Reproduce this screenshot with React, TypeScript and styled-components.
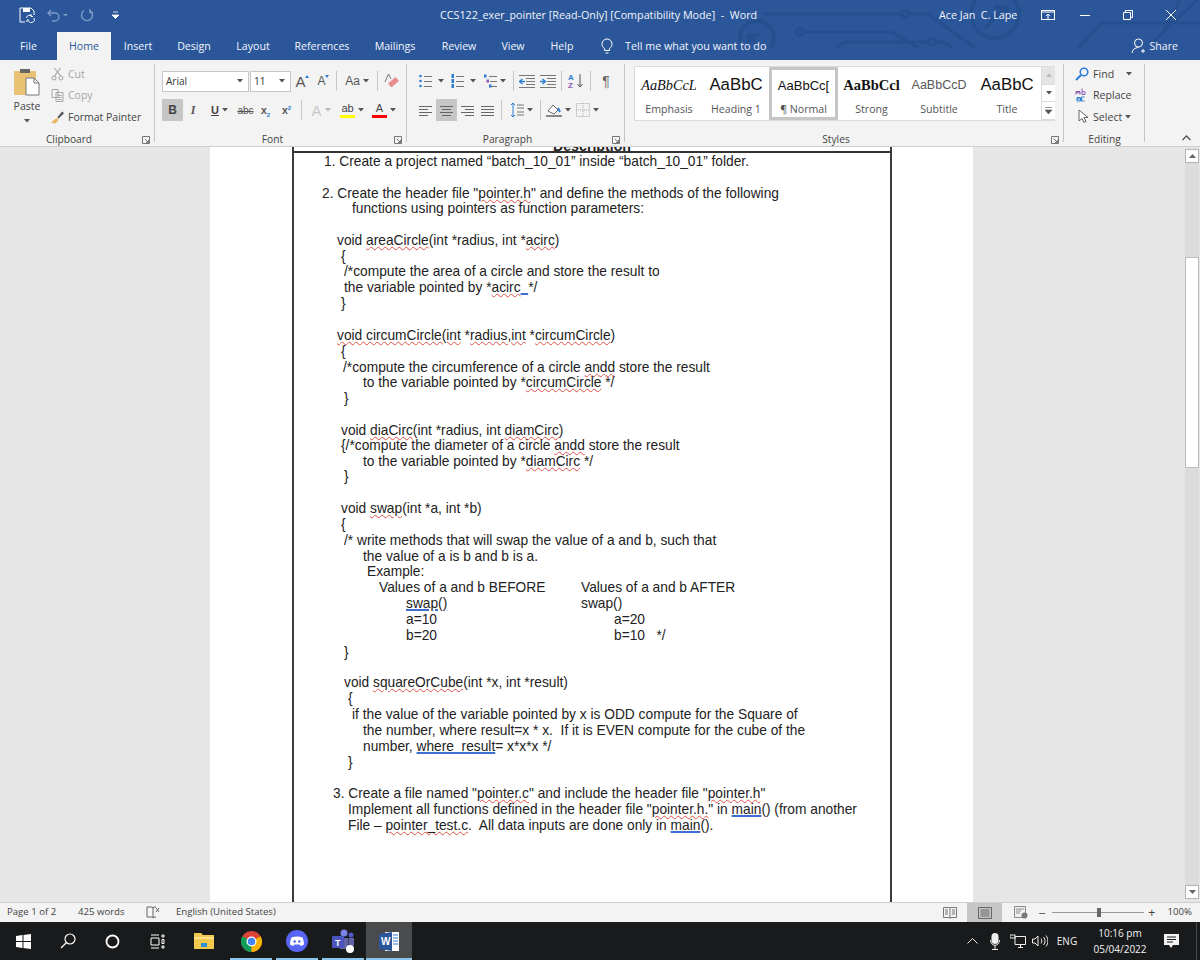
import React from "react";
import styled, { createGlobalStyle } from "styled-components";

const Global = createGlobalStyle`
  html, body { margin: 0; padding: 0; height: 100%; overflow: hidden; background: #e6e6e6; }
  #root { width: 1200px; height: 960px; }
  * { box-sizing: border-box; }
`;
const UI = `"Open Sans", "Noto Sans", sans-serif`;

const Shell = styled.div`
  width: 1200px; height: 960px; display: flex; flex-direction: column;
  font-family: ${UI}; font-size: 10.5px; color: #444; overflow: hidden;
`;
const Header = styled.header`
  position: relative; height: 60px; flex: none; background: #2b579a; color: #f2f5fa; overflow: hidden;
`;
const Circuit = styled.svg`
  position: absolute; left: 0; top: 0; width: 1200px; height: 48px; pointer-events: none;
`;
const TitleRow = styled.div`
  position: relative; height: 30px; display: flex; align-items: center; padding-left: 19px;
`;
const Qat = styled.div`
  width: 421px; display: flex; align-items: center; flex: none; gap: 9px;
`;
const QatIcon = styled.svg<{ $ml: number }>`
  margin-left: ${p => p.$ml}px; flex: none;
`;
const Title = styled.div`
  width: 499px; flex: none; font-size: 10.75px; white-space: pre;
`;
const User = styled.div`
  width: 94px; flex: none; font-size: 10.75px; white-space: pre;
`;
const WinBtn = styled.div<{ $w: number }>`
  width: ${p => p.$w}px; flex: none; display: flex; justify-content: center; align-items: center;
`;
const TabRow = styled.nav`
  position: relative; height: 30px; display: flex; align-items: flex-end;
`;
const Tab = styled.div<{ $w: number; $on?: boolean }>`
  width: ${p => p.$w}px; height: 28px; flex: none; display: flex; align-items: center; justify-content: center;
  font-size: 10.6px; padding-bottom: 1px;
  ${p => p.$on ? "background:#f3f3f3;color:#2b579a;" : ""}
`;
const TellMe = styled.div`
  display: flex; align-items: center; gap: 12px; margin-left: 14px; height: 28px; font-size: 10.75px;
`;
const ShareBox = styled.div`
  margin-left: auto; margin-right: 22px; height: 28px; display: flex; align-items: center; gap: 3px; font-size: 10.6px;
`;

const Ribbon = styled.section`
  height: 87px; flex: none; background: #f3f3f3; border-bottom: 1px solid #cfcfcf; display: flex;
`;
const Group = styled.div<{ $w: number; $pl?: number }>`
  position: relative; width: ${p => p.$w}px; flex: none; height: 86px; display: flex; flex-direction: column;
  padding-left: ${p => p.$pl ?? 0}px;
  &::after { content: ""; position: absolute; right: 0; top: 4px; bottom: 4px; width: 1px; background: #c6c6c6; }
`;
const GroupBody = styled.div`
  height: 71px; flex: none;
`;
const GroupLabel = styled.div<{ $shift?: boolean }>`
  position: absolute; left: 0; right: ${p => p.$shift ? 17 : 0}px; bottom: 0; text-align: center; font-size: 10.2px; color: #444; line-height: 14px;
`;
const Launcher = styled.svg`
  position: absolute; right: 5px; bottom: 2px; width: 8px; height: 8px;
`;
const ClipWrap = styled.div`
  display: flex; height: 71px;
`;
const PasteCol = styled.div`
  width: 51px; flex: none; display: flex; flex-direction: column; align-items: center; padding: 8px 0 0 3px; font-size: 10.5px;
`;
const PasteText = styled.span`
  margin-top: 3px; line-height: 15px;
`;
const PasteArrow = styled.span`
  margin-top: 5px; line-height: 0;
`;
const ClipList = styled.div`
  display: flex; flex-direction: column; padding-top: 3px;
`;
const ClipRow = styled.div<{ $off?: boolean }>`
  height: 21.5px; display: flex; align-items: center; gap: 4px; font-size: 10.5px; color: ${p => p.$off ? "#a6a6a6" : "#444"}; white-space: pre;
`;
const ToolRow = styled.div<{ $top: number }>`
  display: flex; align-items: center; height: 22px; margin-top: ${p => p.$top}px;
`;
const FontBox = styled.div<{ $w: number }>`
  width: ${p => p.$w}px; height: 21px; flex: none; background: #fff; border: 1px solid #c6c6c6; margin-right: 1px;
  display: flex; align-items: center; justify-content: space-between; padding: 0 5px 0 3px; font-size: 10px; color: #333;
`;
const Btn = styled.div<{ $w: number; $on?: boolean; $gap?: number }>`
  width: ${p => p.$w}px; height: 22px; flex: none; display: flex; align-items: center; justify-content: center; gap: ${p => p.$gap ?? 3}px;
  color: #444; font-size: 12px; background: ${p => p.$on ? "#c6c6c6" : "transparent"};
`;
const Sep = styled.div<{ $mx: number }>`
  width: 1px; height: 20px; flex: none; background: #c6c6c6; margin: 0 ${p => p.$mx}px;
`;
const Bold = styled.span`
  font: bold 12px "Liberation Sans", sans-serif; color: #444;
`;
const Italic = styled.span`
  font: italic bold 12px "Liberation Serif", serif; color: #555;
`;
const Under = styled.span`
  font: bold 11px "Liberation Sans", sans-serif; color: #444; text-decoration: underline;
`;
const Strike = styled.span`
  font: 10px "Liberation Sans", sans-serif; color: #555; text-decoration: line-through;
`;
const Script = styled.span`
  font: bold 10.5px "Liberation Sans", sans-serif; color: #555;
  sub, sup { font-size: 6px; color: #2b7cd3; line-height: 0; }
`;
const BigA = styled.span<{ $size: number; $c?: string }>`
  font: ${p => p.$size}px "Liberation Sans", sans-serif; color: ${p => p.$c ?? "#555"}; line-height: 1;
`;
const Caret = styled.svg`
  margin: -9px 0 0 -4px; flex: none;
`;
const ColorA = styled.span<{ $bar: string }>`
  display: inline-flex; flex-direction: column; align-items: center; font: 11px/11px "Liberation Sans", sans-serif; color: #444; width: 15px;
  &::after { content: ""; width: 15px; height: 3px; margin-top: 1px; background: ${p => p.$bar}; }
`;
const Gallery = styled.div`
  margin: 6px 0 0 9px; width: 421px; height: 55px; display: flex; background: #fff; border: 1px solid #dcdcdc;
`;
const StyleItem = styled.div<{ $w: number; $on?: boolean }>`
  width: ${p => p.$w}px; flex: none; height: 53px; display: flex; flex-direction: column; align-items: center;
  border: 3px solid ${p => p.$on ? "#c6c6c6" : "transparent"}; overflow: hidden;
`;
const Sample = styled.div<{ $font: string }>`
  height: 30px; display: flex; align-items: center; white-space: pre; color: #111; ${p => p.$font}
`;
const SampleName = styled.div`
  font-size: 10.6px; color: #555; margin-top: 2px; white-space: pre; line-height: 14px;
`;
const GalleryScroll = styled.div`
  width: 14px; margin-left: auto; flex: none; display: flex; flex-direction: column; border-left: 1px solid #dcdcdc;
`;
const ScrollCell = styled.div<{ $off?: boolean }>`
  flex: 1; display: flex; align-items: center; justify-content: center; background: ${p => p.$off ? "#e4e4e4" : "#fff"};
  border-bottom: 1px solid #dcdcdc; color: #555;
`;
const EditList = styled.div`
  display: flex; flex-direction: column; padding: 3px 0 0 11px;
`;
const EditRow = styled.div<{ $gap: number }>`
  height: 21.5px; display: flex; align-items: center; gap: ${p => p.$gap}px; font-size: 10.6px; color: #444; white-space: pre;
`;
const Collapse = styled.div`
  flex: 1; display: flex; align-items: flex-end; justify-content: flex-end; padding: 0 9px 5px 0;
`;

const DocArea = styled.main`
  flex: 1; display: flex; min-height: 0; background: #e6e6e6;
`;
const Canvas = styled.div`
  flex: 1; overflow: hidden; padding-left: 210px;
`;
const Page = styled.div`
  width: 763px; height: 800px; background: #fff; padding-left: 82px;
`;
const Table = styled.div`
  width: 600px; height: 800px; border-left: 2px solid #3c3c3c; border-right: 2px solid #3c3c3c;
  font-family: "Liberation Sans", Arial, sans-serif; font-size: 13.75px; color: #222;
`;
const Head = styled.div`
  height: 6px; overflow: hidden; display: flex; justify-content: center; align-items: flex-end; margin-bottom: 1px;
  border-bottom: 2px solid #333; font-weight: bold; line-height: 16px; font-size: 14.2px; flex: none;
`;
const HeadText = styled.span`
  margin-bottom: -3px;
`;
const Line = styled.div<{ $x: number; $h: number }>`
  padding-left: ${p => p.$x}px; height: ${p => p.$h}px; line-height: 16px; white-space: pre; display: flex;
`;
const Col = styled.span<{ $w: number }>`
  display: inline-block; width: ${p => p.$w}px; flex: none;
`;
const Sp = styled.span`
  text-decoration: underline wavy #e0504a 1px; text-underline-offset: 1px;
`;
const Gr = styled.span`
  text-decoration: underline solid #3c6fd0 2px; text-underline-offset: 1px;
`;
const VBar = styled.aside`
  width: 16px; flex: none; display: flex; flex-direction: column; padding: 2px 1px 3px 1px;
`;
const VBtn = styled.div`
  width: 14px; height: 14px; background: #fff; border: 1px solid #b4b4b4; display: flex; align-items: center; justify-content: center; flex: none;
`;
const VTrack = styled.div`
  flex: 1; padding-top: 94px; background: #dcdcdc;
`;
const VThumb = styled.div`
  width: 14px; height: 211px; background: #fff; border: 1px solid #bcbcbc;
`;

const Status = styled.footer`
  height: 20px; flex: none; background: #f3f3f3; border-top: 1px solid #cfcfcf; display: flex; align-items: center;
  font-size: 9.6px; color: #444;
`;
const StatusItem = styled.div<{ $w: number; $pl?: number }>`
  width: ${p => p.$w}px; flex: none; white-space: pre; display: flex; align-items: center; height: 19px;
  padding: 0 0 2px ${p => p.$pl ?? 0}px;
`;
const ZoomPct = styled.div`
  flex: 1; text-align: right; padding: 0 8px 2px 0; white-space: pre;
`;
const ViewBtn = styled.div<{ $on?: boolean; $w: number }>`
  width: ${p => p.$w}px; height: 19px; flex: none; display: flex; align-items: center; justify-content: center;
  background: ${p => p.$on ? "#c6c6c6" : "transparent"};
`;
const Zoomer = styled.div`
  width: 92px; height: 1px; background: #9a9a9a; flex: none; margin: 0 4px 0 7px; position: relative;
`;
const ZoomThumb = styled.div`
  position: absolute; left: 45px; top: -4px; width: 4px; height: 9px; background: #666;
`;

const Taskbar = styled.footer`
  height: 38px; flex: none; background: #191a1b; display: flex; color: #f2f2f2;
`;
const Slot = styled.div<{ $w: number; $run?: boolean; $act?: boolean }>`
  position: relative; width: ${p => p.$w}px; flex: none; display: flex; align-items: center; justify-content: center;
  background: ${p => p.$act ? "#4a4b4c" : "transparent"};
  ${p => p.$run ? `&::after{content:"";position:absolute;left:${p.$act ? 0 : 2}px;right:${p.$act ? 0 : 2}px;bottom:0;height:2px;background:#8cc4ee;}` : ""}
`;
const Tray = styled.div`
  margin-left: auto; display: flex; width: 240px; height: 38px;
`;
const Clock = styled.div`
  width: 72px; flex: none; display: flex; flex-direction: column; align-items: center; justify-content: center;
  font-size: 10px; line-height: 16px; white-space: pre;
`;
const Eng = styled.div`
  width: 34px; flex: none; display: flex; align-items: center; justify-content: center; font-size: 10px;
`;
const DeskEdge = styled.div`
  width: 11px; flex: none; border-right: 1px solid #4a4b4c;
`;

const Arrow = ({ c = "#555" }: { c?: string }) => (
  <svg width="6" height="4" viewBox="0 0 6 4"><path d="M0 0h6L3 3.500z" fill={c} /></svg>
);
const Lines = ({ kind = "l" }: { kind?: string }) => {
  const ys = [3, 6, 9, 12];
  const xs: Record<string, [number, number][]> = {
    l: [[0, 13], [0, 9], [0, 13], [0, 9]],
    c: [[0, 13], [2, 11], [0, 13], [2, 11]],
    r: [[0, 13], [4, 13], [0, 13], [4, 13]],
    j: [[0, 13], [0, 13], [0, 13], [0, 13]],
  };
  return (
    <svg width="13" height="15" viewBox="0 0 13 15">
      {ys.map((y, i) => <path key={y} d={`M${xs[kind][i][0]} ${y}.5H${xs[kind][i][1]}`} stroke="#666" />)}
    </svg>
  );
};
const ListIcon = ({ kind }: { kind: "b" | "n" | "m" }) => (
  <svg width="13" height="14" viewBox="0 0 13 14">
    {[2, 7, 12].map((y, i) => (
      <g key={y}>
        {kind === "b" && <circle cx="1.500" cy={y} r="1.300" fill="#2b7cd3" />}
        {kind === "n" && <rect x=".5" y={y - 2} width="2.500" height="4" fill="#2b7cd3" />}
        {kind === "m" && <rect x={i * 2.5} y={y - 1.500} width="2.500" height="3" fill={i === 1 ? "#8a5ab5" : "#2b7cd3"} />}
        <path d={`M${kind === "m" ? 5 + i : 5} ${y}.5H13`} stroke="#777" />
      </g>
    ))}
  </svg>
);
const IndentIcon = ({ flip }: { flip?: boolean }) => (
  <svg width="16" height="13" viewBox="0 0 16 13">
    {[0, 3, 6, 9, 12].map(y => <path key={y} d={`M${y === 0 || y === 12 ? 0 : 7} ${y}.5H16`} stroke="#777" />)}
    <path d={flip ? "M0 6.500h5M2.500 4l3 2.500-3 2.500" : "M6 6.500H1M3.500 4L.5 6.500l3 2.500"} stroke="#2b7cd3" strokeWidth="1.400" fill="none" />
  </svg>
);

const raw: [number, number, React.ReactNode][] = [
  [324, 161, <>1. Create a project named “batch_10_01” inside “batch_10_01” folder.</>],
  [322, 193, <>2. Create the header file "<Sp>pointer.h</Sp>" and define the methods of the following</>],
  [352, 208, <>functions using pointers as function parameters:</>],
  [337, 240, <>void <Sp>areaCircle</Sp>(int *radius, int *<Sp>acirc</Sp>)</>],
  [341, 256, <>{"{"}</>],
  [344, 271, <>/*compute the area of a circle and store the result to</>],
  [344, 287, <>the variable pointed by *<Sp>acirc</Sp> <Gr>  </Gr>*/</>],
  [341, 303, <>{"}"}</>],
  [337, 335, <><Sp>void circumCircle(int</Sp> *<Sp>radius,int</Sp> *<Sp>circumCircle</Sp>)</>],
  [341, 351, <>{"{"}</>],
  [343, 367, <>/*compute the circumference of a circle <Sp>andd</Sp> store the result</>],
  [363, 382, <>to the variable pointed by *<Sp>circumCircle</Sp> */</>],
  [344, 398, <>{"}"}</>],
  [341, 430, <>void <Sp>diaCirc</Sp>(int *radius, int <Sp>diamCirc</Sp>)</>],
  [341, 445, <>{"{"}/*compute the diameter of a circle <Sp>andd</Sp> store the result</>],
  [363, 461, <>to the variable pointed by *<Sp>diamCirc</Sp> */</>],
  [344, 476, <>{"}"}</>],
  [341, 508, <>void <Sp>swap</Sp>(int *a, int *b)</>],
  [341, 524, <>{"{"}</>],
  [344, 540, <>/* write methods that will swap the value of a and b, such that</>],
  [363, 556, <>the value of a is b and b is a.</>],
  [367, 571, <>Example:</>],
  [379, 587, <><Col $w={202}>Values of a and b BEFORE</Col>Values of a and b AFTER</>],
  [406, 603, <><Col $w={175}><Gr>swap()</Gr></Col>swap()</>],
  [406, 619, <><Col $w={208}>a=10</Col>a=20</>],
  [406, 635, <><Col $w={208}>b=20</Col>b=10   */</>],
  [344, 652, <>{"}"}</>],
  [344, 682, <>void <Sp>squareOrCube</Sp>(int *x, int *result)</>],
  [348, 698, <>{"{"}</>],
  [352, 714, <>if the value of the variable pointed by x is ODD compute for the Square of</>],
  [363, 730, <>the number, where result=x * x.  If it is EVEN compute for the cube of the</>],
  [363, 746, <>number, <Gr>where  result</Gr>= x*x*x */</>],
  [348, 762, <>{"}"}</>],
  [333, 793, <>3. Create a file named "<Sp>pointer.c</Sp>" and include the header file "<Sp>pointer.h</Sp>"</>],
  [348, 809, <>Implement all functions defined in the header file "<Sp>pointer.h.</Sp>" in <Gr>main</Gr>() (from another</>],
  [348, 825, <>File – <Sp>pointer_test.c</Sp>.  All data inputs are done only in <Gr>main</Gr>().</>],
];
const tabs: [string, number][] = [["Insert", 54], ["Design", 58], ["Layout", 60], ["References", 78], ["Mailings", 68], ["Review", 60], ["View", 48], ["Help", 50]];
const styleItems: [string, number, string, string][] = [
  ["AaBbCcL", 68, "Emphasis", `font: italic 14.3px "Liberation Serif", serif;`],
  ["AaBbC", 66, "Heading 1", `font: 16.8px "Liberation Sans", sans-serif;`],
  ["AaBbCc[", 69, "¶ Normal", `font: 13px "Liberation Sans", sans-serif;`],
  ["AaBbCcl", 67, "Strong", `font: bold 14.5px "Liberation Serif", serif;`],
  ["AaBbCcD", 68, "Subtitle", `font: 12.5px "Liberation Sans", sans-serif; color:#555;`],
  ["AaBbC", 68, "Title", `font: 16.8px "Liberation Sans", sans-serif;`],
];
const LaunchIcon = () => (
  <Launcher viewBox="0 0 8 8"><path d="M.5 7.500v-7h7v7zM3 3l3.500 3.500M6.500 4v2.500H4" stroke="#777" fill="none" /></Launcher>
);

export default function App() {
  return (
    <Shell>
      <Global />
      <Header>
        <Circuit viewBox="0 0 1200 48">
          <g stroke="#24508f" strokeWidth="3" fill="none">
            <circle cx="757" cy="38" r="17" strokeWidth="4" />
            <path d="M760 47L749 35M749 44v-9h10" strokeWidth="3.500" />
            <circle cx="995" cy="14" r="24" strokeWidth="4" />
            <path d="M985 28l20-20M994 7h13v13" strokeWidth="4" />
            <path d="M763 14H901M909 14h19l47 34" />
            <circle cx="905" cy="14" r="3.500" />
            <circle cx="800" cy="32" r="3.500" />
            <path d="M804 32H892l26 16" />
            <path d="M835 48l10-6H928M936 42h8l8 6" />
            <circle cx="932" cy="42" r="3.500" />
            <path d="M1078 48l24-25H1200M1153 42L1197 0M1163 33L1180 0" />
          </g>
        </Circuit>
        <TitleRow>
          <Qat>
            <svg width="16" height="16" viewBox="0 0 16 16"><path d="M1 1h11l3 3v4M1 1v14h5" fill="none" stroke="#fff" /><path d="M4 1h7v4H4z" fill="#fff" /><path d="M7.500 11a3 3 0 0 1 5-2M15 11a3 3 0 0 1-5.500 3M12 7v2.500h2M8 15v-2h2" stroke="#fff" fill="none" /></svg>
            <QatIcon $ml={3} width="22" height="14" viewBox="0 0 22 14"><path d="M4 2L1 5l3 3M1 5h7a4 4 0 0 1 0 8H5" stroke="#7d9ac6" strokeWidth="1.400" fill="none" /><path d="M16 6h5l-2.500 2.500z" fill="#7d9ac6" /></QatIcon>
            <QatIcon $ml={2} width="14" height="14" viewBox="0 0 14 14"><path d="M10 2.500a5.500 5.500 0 1 1-6 0M10 1v3.500h3" stroke="#7d9ac6" strokeWidth="1.400" fill="none" /></QatIcon>
            <QatIcon $ml={9} width="7" height="8" viewBox="0 0 7 8"><path d="M1 1h5M0 4h7L3.500 7.500z" stroke="#fff" fill="#fff" strokeWidth=".8" /></QatIcon>
          </Qat>
          <Title>CCS122_exer_pointer [Read-Only] [Compatibility Mode]  -  Word</Title>
          <User>Ace Jan  C. Lape</User>
          <WinBtn $w={30}><svg width="14" height="10" viewBox="0 0 14 10"><rect x=".5" y=".5" width="13" height="9" fill="none" stroke="#fff" /><path d="M1 2h12" stroke="#fff" /><path d="M7 9V4M5 6l2-2 2 2" stroke="#fff" fill="none" /></svg></WinBtn>
          <WinBtn $w={43}><svg width="10" height="1"><rect width="10" height="1" fill="#fff" /></svg></WinBtn>
          <WinBtn $w={43}><svg width="10" height="10" viewBox="0 0 10 10"><path d="M.5 2.500h7v7h-7zM2.500 2.500v-2h7v7h-2" fill="none" stroke="#fff" /></svg></WinBtn>
          <WinBtn $w={43}><svg width="10" height="10" viewBox="0 0 10 10"><path d="M0 0l10 10M10 0L0 10" stroke="#fff" /></svg></WinBtn>
        </TitleRow>
        <TabRow>
          <Tab $w={57}>File</Tab>
          <Tab $w={54} $on>Home</Tab>
          {tabs.map(([t, w]) => <Tab key={t} $w={w}>{t}</Tab>)}
          <TellMe>
            <svg width="12" height="16" viewBox="0 0 12 16"><path d="M3.500 10.500C2 9.500 1 8 1 6a5 5 0 0 1 10 0c0 2-1 3.500-2.500 4.500v2h-5zM4.500 15h3" stroke="#fff" fill="none" /></svg>
            Tell me what you want to do
          </TellMe>
          <ShareBox>
            <svg width="16" height="16" viewBox="0 0 16 16"><circle cx="7.500" cy="5" r="4" stroke="#fff" fill="none" /><path d="M1 15c.5-3.500 3-5.500 6.500-5.500M12 11v4M10 13h4" stroke="#fff" fill="none" /></svg>
            Share
          </ShareBox>
        </TabRow>
      </Header>

      <Ribbon>
        <Group $w={155}>
          <GroupBody>
            <ClipWrap>
              <PasteCol>
                <svg width="28" height="28" viewBox="0 0 28 28"><rect x="1" y="3" width="22" height="24" rx="1" fill="#eac274" /><rect x="7" y="1" width="10" height="4" fill="#666" /><path d="M13 10h8l5 5v12H13z" fill="#fff" stroke="#777" /><path d="M21 10v5h5" fill="none" stroke="#777" /></svg>
                <PasteText>Paste</PasteText>
                <PasteArrow><Arrow /></PasteArrow>
              </PasteCol>
              <ClipList>
                <ClipRow $off><svg width="13" height="14" viewBox="0 0 12 14"><path d="M3 1l6 8M9 1L3 9" stroke="#a6a6a6" strokeWidth="1.200" /><circle cx="2.500" cy="11" r="2" fill="none" stroke="#a6a6a6" /><circle cx="9.500" cy="11" r="2" fill="none" stroke="#a6a6a6" /></svg>Cut</ClipRow>
                <ClipRow $off><svg width="13" height="14" viewBox="0 0 12 14"><path d="M.5 1.500h6v8h-6zM4.500 4.500h7v9h-7z" fill="#f3f3f3" stroke="#a6a6a6" /><path d="M6 7.500h4M6 9.500h4M6 11.500h4" stroke="#a6a6a6" /></svg>Copy</ClipRow>
                <ClipRow><svg width="13" height="14" viewBox="0 0 14 14"><path d="M0 13l6-5 2 2-3 4z" fill="#e8b45e" /><path d="M7 7l5-6 2 2-6 6z" fill="#555" /></svg>Format Painter</ClipRow>
              </ClipList>
            </ClipWrap>
          </GroupBody>
          <GroupLabel $shift>Clipboard</GroupLabel>
          <LaunchIcon />
        </Group>

        <Group $w={252} $pl={7}>
          <GroupBody>
            <ToolRow $top={10}>
              <FontBox $w={87}>Arial<Arrow /></FontBox>
              <FontBox $w={41}>11<Arrow /></FontBox>
              <Btn $w={20}><BigA $size={15}>A</BigA><Caret width="4" height="3"><path d="M0 3L2 0l2 3z" fill="#2b7cd3" /></Caret></Btn>
              <Btn $w={22}><BigA $size={12}>A</BigA><Caret width="4" height="3"><path d="M0 0l2 3 2-3z" fill="#2b7cd3" /></Caret></Btn>
              <Sep $mx={2} />
              <Btn $w={36}><BigA $size={12}>Aa</BigA><Arrow /></Btn>
              <Sep $mx={2} />
              <Btn $w={24}><svg width="17" height="16" viewBox="0 0 17 16"><path d="M8 14l7-6-3.500-4-7.500 6.500 3 3.500z" fill="#e78f8f" /><path d="M1 9l3.500-8L7 6" stroke="#777" fill="none" /></svg></Btn>
            </ToolRow>
            <ToolRow $top={7}>
              <Btn $w={21} $on><Bold>B</Bold></Btn>
              <Btn $w={20}><Italic>I</Italic></Btn>
              <Btn $w={33}><Under>U</Under><Arrow /></Btn>
              <Btn $w={19}><Strike>abc</Strike></Btn>
              <Btn $w={21}><Script>x<sub>2</sub></Script></Btn>
              <Btn $w={21}><Script>x<sup>2</sup></Script></Btn>
              <Sep $mx={4} />
              <Btn $w={30}><BigA $size={15} $c="#c8c8c8">A</BigA><Arrow c="#bbb" /></Btn>
              <Btn $w={32}><ColorA $bar="#ffff00">ab</ColorA><Arrow /></Btn>
              <Btn $w={32}><ColorA $bar="#ff0000">A</ColorA><Arrow /></Btn>
            </ToolRow>
          </GroupBody>
          <GroupLabel $shift>Font</GroupLabel>
          <LaunchIcon />
        </Group>

        <Group $w={218} $pl={8}>
          <GroupBody>
            <ToolRow $top={10}>
              <Btn $w={32} $gap={6}><ListIcon kind="b" /><Arrow /></Btn>
              <Btn $w={32} $gap={6}><ListIcon kind="n" /><Arrow /></Btn>
              <Btn $w={32}><ListIcon kind="m" /><Arrow /></Btn>
              <Sep $mx={2} />
              <Btn $w={22}><IndentIcon /></Btn>
              <Btn $w={20}><IndentIcon flip /></Btn>
              <Sep $mx={3} />
              <Btn $w={22}><svg width="16" height="16" viewBox="0 0 16 16"><text x="0" y="7" fontSize="8" fontWeight="bold" fill="#2b7cd3" fontFamily="Liberation Sans">A</text><text x="0" y="15" fontSize="8" fontWeight="bold" fill="#8a5ab5" fontFamily="Liberation Sans">Z</text><path d="M12 1v13M9.500 11l2.500 3 2.500-3" stroke="#555" fill="none" /></svg></Btn>
              <Sep $mx={3} />
              <Btn $w={24}><BigA $size={14} $c="#666">¶</BigA></Btn>
            </ToolRow>
            <ToolRow $top={7}>
              <Btn $w={21}><Lines kind="l" /></Btn>
              <Btn $w={21} $on><Lines kind="c" /></Btn>
              <Btn $w={20}><Lines kind="r" /></Btn>
              <Btn $w={21}><Lines kind="j" /></Btn>
              <Sep $mx={3} />
              <Btn $w={32}><svg width="14" height="16" viewBox="0 0 14 16"><path d="M3 1v14M1 3l2-2 2 2M1 13l2 2 2-2" stroke="#2b7cd3" fill="none" /><path d="M7 3h7M7 6h7M7 10h7M7 13h7" stroke="#777" /></svg><Arrow /></Btn>
              <Sep $mx={3} />
              <Btn $w={28}><svg width="16" height="16" viewBox="0 0 16 16"><path d="M2 9l5-6 5 5-4 4z" fill="#fff" stroke="#666" /><path d="M12 6l2 4" stroke="#2b7cd3" strokeWidth="2" /><rect x="0" y="13" width="16" height="2" fill="#888" /></svg><Arrow /></Btn>
              <Btn $w={31}><svg width="14" height="14" viewBox="0 0 14 14"><rect x=".5" y=".5" width="13" height="13" fill="none" stroke="#aaa" strokeDasharray="1 1" /><path d="M7 0v14M0 7h14" stroke="#aaa" strokeDasharray="1 1" /></svg><Arrow /></Btn>
            </ToolRow>
          </GroupBody>
          <GroupLabel $shift>Paragraph</GroupLabel>
          <LaunchIcon />
        </Group>

        <Group $w={439}>
          <GroupBody>
            <Gallery>
              {styleItems.map(([s, w, n, f], i) => (
                <StyleItem key={n} $w={w} $on={i === 2}>
                  <Sample $font={f}>{s}</Sample>
                  <SampleName>{n}</SampleName>
                </StyleItem>
              ))}
              <GalleryScroll>
                <ScrollCell $off><svg width="6" height="4"><path d="M3 0l3 4H0z" fill="#bbb" /></svg></ScrollCell>
                <ScrollCell><Arrow /></ScrollCell>
                <ScrollCell><svg width="7" height="7"><path d="M0 .5h7M0 3h7L3.500 7z" stroke="#555" strokeWidth=".6" fill="#555" /></svg></ScrollCell>
              </GalleryScroll>
            </Gallery>
          </GroupBody>
          <GroupLabel $shift>Styles</GroupLabel>
          <LaunchIcon />
        </Group>

        <Group $w={81}>
          <GroupBody>
            <EditList>
              <EditRow $gap={4}><svg width="14" height="14" viewBox="0 0 14 14"><circle cx="9" cy="5" r="3.800" fill="none" stroke="#2b7cd3" strokeWidth="1.500" /><path d="M6 8l-5 5" stroke="#2b7cd3" strokeWidth="2" /></svg>Find   <Arrow /></EditRow>
              <EditRow $gap={3}><svg width="15" height="15" viewBox="0 0 15 15"><circle cx="3" cy="2.500" r="0" /><path d="M1 6.500V3.500h4v3M1 4.800h4M7 .5v6M7 3.800h3V6.500H7" stroke="#8a5ab5" fill="none" /><path d="M9.500 9h-3v4h3M5 9.500H2v3.500h3.500V9.500M2 11h3" stroke="#2b7cd3" fill="none" /></svg>Replace</EditRow>
              <EditRow $gap={3}><svg width="15" height="15" viewBox="0 0 15 15"><path d="M4 1v11l3-2.500 2 4 2-1-2-4h4z" fill="#fff" stroke="#666" /></svg>Select<Arrow /></EditRow>
            </EditList>
          </GroupBody>
          <GroupLabel>Editing</GroupLabel>
        </Group>
        <Collapse><svg width="9" height="6" viewBox="0 0 9 6"><path d="M.5 5L4.500 1l4 4" stroke="#555" strokeWidth="1.300" fill="none" /></svg></Collapse>
      </Ribbon>

      <DocArea>
        <Canvas>
          <Page>
            <Table>
              <Head><HeadText>Description</HeadText></Head>
              {raw.map(([x, y, c], i) => (
                <Line key={i} $x={x - 294} $h={(raw[i + 1]?.[1] ?? y + 16) - y}>{c}</Line>
              ))}
            </Table>
          </Page>
        </Canvas>
        <VBar>
          <VBtn><svg width="7" height="4"><path d="M3.500 0L7 4H0z" fill="#666" /></svg></VBtn>
          <VTrack><VThumb /></VTrack>
          <VBtn><svg width="7" height="4"><path d="M0 0h7L3.500 4z" fill="#666" /></svg></VBtn>
        </VBar>
      </DocArea>

      <Status>
        <StatusItem $w={78} $pl={7}>Page 1 of 2</StatusItem>
        <StatusItem $w={68}>425 words</StatusItem>
        <StatusItem $w={30}><svg width="14" height="14" viewBox="0 0 14 14"><path d="M1 2h5l1 1v10L6 12H1zM7 3l1-1h2M7 13l1-1h2" fill="none" stroke="#666" /><path d="M10 3l3 4M13 3l-3 4" stroke="#666" /></svg></StatusItem>
        <StatusItem $w={180}>English (United States)</StatusItem>
        <StatusItem $w={576} />
        <ViewBtn $w={35}><svg width="14" height="12" viewBox="0 0 14 12"><path d="M.5.500h6l.5 1 .5-1h6v10h-6l-.5 1-.5-1h-6zM7 1.500v9M2 3h3M2 5h3M2 7h3M9 3h3M9 5h3M9 7h3" fill="none" stroke="#777" /></svg></ViewBtn>
        <ViewBtn $w={35} $on><svg width="14" height="12" viewBox="0 0 14 12"><path d="M.5.500h13v11H.5zM2.500 3h9M2.500 5h9M2.500 7h9M2.500 9h9" fill="none" stroke="#666" /></svg></ViewBtn>
        <ViewBtn $w={37}><svg width="14" height="13" viewBox="0 0 14 13"><path d="M.5.500h11v11H.5zM2 3h8M2 5h5M2 7h4" fill="none" stroke="#888" /><circle cx="10.500" cy="9.500" r="3" fill="#777" /></svg></ViewBtn>
        <BigA $size={11} $c="#444">–</BigA>
        <Zoomer><ZoomThumb /></Zoomer>
        <BigA $size={12} $c="#444">+</BigA>
        <ZoomPct>100%</ZoomPct>
      </Status>

      <Taskbar>
        <Slot $w={46}><svg width="15" height="15" viewBox="0 0 15 15"><path d="M0 2l6.500-1v6H0zM7.500 1L15 0v7H7.500zM0 8h6.500v6L0 13zM7.500 8H15v7l-7.500-1z" fill="#fff" /></svg></Slot>
        <Slot $w={44}><svg width="16" height="16" viewBox="0 0 16 16"><circle cx="10" cy="6" r="5" stroke="#fff" fill="none" strokeWidth="1.200" /><path d="M6.500 9.500L1 15" stroke="#fff" strokeWidth="1.300" /></svg></Slot>
        <Slot $w={44}><svg width="15" height="15" viewBox="0 0 15 15"><circle cx="7.500" cy="7.500" r="6" stroke="#fff" fill="none" strokeWidth="1.800" /></svg></Slot>
        <Slot $w={46}><svg width="15" height="15" viewBox="0 0 15 15"><path d="M1 4h8v7H1zM1 1h8M1 14h8M12 1h2v2h-2zM12 5.500h2v4h-2zM12 12h2v2h-2z" fill="none" stroke="#fff" /></svg></Slot>
        <Slot $w={48}><svg width="20" height="18" viewBox="0 0 20 18"><path d="M0 1h7l2 2h11v14H0z" fill="#f2c94c" /><path d="M0 5h20v2H0z" fill="#ffe18a" /><path d="M7 15v-4h6v4z" fill="#2b8fd8" /></svg></Slot>
        <Slot $w={46} $run><svg width="21" height="21" viewBox="0 0 21 21"><circle cx="10.500" cy="10.500" r="10.500" fill="#db4437" /><path d="M10.500 10.500L1.400 5.250A10.500 10.500 0 0 0 10.500 21z" fill="#0f9d58" /><path d="M10.500 10.500L10.500 21A10.500 10.500 0 0 0 19.600 5.250z" fill="#f4b400" /><circle cx="10.500" cy="10.500" r="5" fill="#fff" /><circle cx="10.500" cy="10.500" r="3.800" fill="#4285f4" /></svg></Slot>
        <Slot $w={46} $run><svg width="22" height="22" viewBox="0 0 22 22"><circle cx="11" cy="11" r="11" fill="#5865f2" /><path d="M5.500 7.500c3.500-1.500 7.500-1.500 11 0 1 2.500 1.500 5 1.500 7-1.200 1-2.500 1.300-3.500 1.300l-1-1.300h-5l-1 1.300c-1 0-2.300-.300-3.500-1.300 0-2 .500-4.500 1.500-7z" fill="#fff" /><circle cx="8.700" cy="11.500" r="1.300" fill="#5865f2" /><circle cx="13.300" cy="11.500" r="1.300" fill="#5865f2" /></svg></Slot>
        <Slot $w={46} $run><svg width="23" height="24" viewBox="0 0 23 24"><circle cx="12" cy="4" r="3.500" fill="#7b83eb" /><circle cx="19" cy="6" r="2.500" fill="#5059c9" /><path d="M8 9h8v11H8zM16.500 9H22v7a3 3 0 0 1-5.500 1z" fill="#6264a7" /><rect y="7" width="12" height="12" rx="1" fill="#4b53bc" /><text x="3" y="16.500" fontSize="9" fontWeight="bold" fill="#fff" fontFamily="Liberation Sans">T</text><circle cx="18" cy="20" r="4" fill="#fff" /></svg></Slot>
        <Slot $w={46} $run $act><svg width="21" height="21" viewBox="0 0 21 21"><path d="M6 1h14v19H6z" fill="#fff" /><path d="M14 4h5M14 7h5M14 10h5M14 13h5" stroke="#2b7cd3" strokeWidth="1.200" /><path d="M0 3l13-2v19L0 18z" fill="#2b579a" /><text x="2" y="14" fontSize="10" fontWeight="bold" fill="#fff" fontFamily="Liberation Sans">W</text></svg></Slot>
        <Tray>
          <Slot $w={24}><svg width="11" height="6" viewBox="0 0 11 6"><path d="M.5 5.500l5-5 5 5" stroke="#eee" fill="none" /></svg></Slot>
          <Slot $w={22}><svg width="10" height="17" viewBox="0 0 10 17"><rect x="1.500" y="0" width="7" height="11" rx="3.500" fill="#eee" /><path d="M.5 7c0 7 9 7 9 0M5 12v4M2 16.500h6" stroke="#eee" fill="none" /></svg></Slot>
          <Slot $w={23}><svg width="16" height="14" viewBox="0 0 16 14"><path d="M5 2.500h10.500v8H5zM8 13.500h5M10.500 10.500v3" stroke="#eee" fill="none" /><rect x="0" y="1" width="5" height="3" fill="none" stroke="#eee" /></svg></Slot>
          <Slot $w={21}><svg width="16" height="12" viewBox="0 0 16 12"><path d="M.5 4h2.500l3-3v10l-3-3H.5zM9 3.500c1 1.500 1 3.500 0 5M11.500 2c2 2.500 2 5.500 0 8M14 .500c2.500 3.500 2.500 7.500 0 11" stroke="#eee" fill="none" /></svg></Slot>
          <Eng>ENG</Eng>
          <Clock><span>10:16 pm</span><span>05/04/2022</span></Clock>
          <Slot $w={30}><svg width="15" height="15" viewBox="0 0 15 15"><path d="M0 0h15v11H9l-2 3-2-3H0z" fill="#f2f2f2" /><path d="M3 3h9M3 5.500h9M3 8h6" stroke="#191a1b" /></svg></Slot>
          <DeskEdge />
        </Tray>
      </Taskbar>
    </Shell>
  );
}
